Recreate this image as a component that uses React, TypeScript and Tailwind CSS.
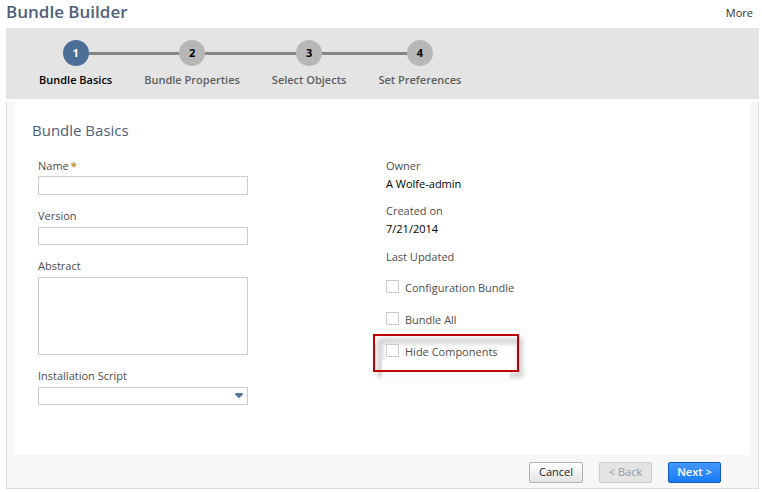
const steps = ["Bundle Basics", "Bundle Properties", "Select Objects", "Set Preferences"];

const labelClass = "block text-[11px] leading-4 font-medium text-[#4d4d4d]";
const fieldClass = "block w-full border border-[#cccccc] bg-white px-1 text-[11px] text-[#333333] outline-none";

function StepBar() {
  return (
    <ol className="flex bg-[#e4e4e4] px-[17px] pt-3 pb-[11px]">
      {steps.map((step, i) => (
        <li key={step} className="flex flex-col">
          <div className="flex items-center">
            <span className={i > 0 ? "h-[3px] flex-1 bg-[#858585]" : "h-[3px] flex-1"} />
            <span
              className={
                i === 0
                  ? "size-[26px] rounded-full bg-[#4b6e97] text-center text-[11px] leading-[26px] font-bold text-white"
                  : "size-[26px] rounded-full bg-[#b7b7b7] text-center text-[11px] leading-[26px] font-bold text-black"
              }
            >
              {i + 1}
            </span>
            <span className={i < steps.length - 1 ? "h-[3px] flex-1 bg-[#858585]" : "h-[3px] flex-1"} />
          </div>
          <span
            className={
              i === 0
                ? "mt-1.5 px-4 text-[11px] leading-4 font-semibold whitespace-nowrap text-black"
                : "mt-1.5 px-4 text-[11px] leading-4 font-semibold whitespace-nowrap text-[#606060]"
            }
          >
            {step}
          </span>
        </li>
      ))}
    </ol>
  );
}

function Check({ id, label }: { id: string; label: string }) {
  return (
    <div className="flex h-4 items-start gap-1.5">
      <input id={id} type="checkbox" className="size-[13px] shrink-0 appearance-none border border-[#cccccc] bg-white checked:bg-[#4b6e97]" />
      <label htmlFor={id} className="text-[11px] leading-4 font-medium text-[#4d4d4d]">
        {label}
      </label>
    </div>
  );
}

function Highlight() {
  return (
    <div className="pointer-events-none absolute -top-2.5 -left-[13px] h-[38px] w-[146px]">
      <div className="absolute top-1 left-1 h-10 w-full rounded-xs border-[6px] border-[#0000002b] blur-[2px]" />
      <div className="absolute right-[9px] bottom-0 left-[9px] h-3 bg-white" />
      <div className="absolute top-[38px] right-[9px] left-[9px] h-2 bg-[#fcfcfc]" />
      <div className="absolute inset-0 border-2 border-[#c00000]" />
    </div>
  );
}

export default function App() {
  return (
    <main className="bg-white pr-[3px] pb-[3px] pl-1.5 font-['Open_Sans','Noto_Sans',sans-serif]">
      <header className="flex h-7 items-start justify-between pr-1.5">
        <h1 className="text-[17px] leading-6 font-semibold text-[#4d5f79]">Bundle Builder</h1>
        <a href="#more" className="pt-[5px] text-[11px] leading-4 text-[#333333]">
          More
        </a>
      </header>
      <StepBar />
      <form className="mt-[3px] border border-t-0 border-[#dddddd] bg-[#f7f7f7] px-2" onSubmit={(e) => e.preventDefault()}>
        <section className="bg-white px-[17px] pt-[18px] pb-[50px]">
          <h2 className="text-[15px] leading-5 text-[#4d5f79]">Bundle Basics</h2>
          <div className="mt-[18px] flex gap-[138px] pl-1.5">
            <div className="w-[210px]">
              <label htmlFor="name" className={labelClass}>
                Name <span className="-ml-px font-bold text-[#c48a2c]">*</span>
              </label>
              <input id="name" type="text" className={`${fieldClass} mt-0.5 h-[19px]`} />
              <label htmlFor="version" className={`${labelClass} mt-[13px]`}>
                Version
              </label>
              <input id="version" type="text" className={`${fieldClass} mt-[3px] h-[18px]`} />
              <label htmlFor="abstract" className={`${labelClass} mt-[13px]`}>
                Abstract
              </label>
              <textarea id="abstract" className={`${fieldClass} mt-[3px] h-[78px] resize-none`} />
              <label htmlFor="script" className={`${labelClass} mt-[13px]`}>
                Installation Script
              </label>
              <div className="relative mt-[3px]">
                <select id="script" className={`${fieldClass} h-[18px] appearance-none`}>
                  <option value=""></option>
                </select>
                <svg className="pointer-events-none absolute top-1.5 right-[5px]" width="8" height="5" viewBox="0 0 8 5" aria-hidden="true">
                  <path d="M0.5 0h7L8 1.5 4.6 4.7a.9.9 0 0 1-1.2 0L0 1.5z" fill="#56759d" />
                </svg>
              </div>
            </div>
            <div>
              <dl className="text-[11px] leading-4">
                <dt className="font-medium text-[#4d4d4d]">Owner</dt>
                <dd className="mt-0.5 text-black">A Wolfe-admin</dd>
                <dt className="mt-[11px] font-medium text-[#4d4d4d]">Created on</dt>
                <dd className="mt-0.5 text-black">7/21/2014</dd>
                <dt className="mt-3 font-medium text-[#4d4d4d]">Last Updated</dt>
              </dl>
              <div className="mt-[15px] flex flex-col gap-4">
                <Check id="configuration" label="Configuration Bundle" />
                <Check id="all" label="Bundle All" />
                <div className="relative">
                  <Highlight />
                  <div className="relative">
                    <Check id="hide" label="Hide Components" />
                  </div>
                </div>
              </div>
            </div>
          </div>
        </section>
        <footer className="flex justify-end gap-4 pt-[7px] pr-[29px] pb-[5px] text-[11px] font-medium">
          <button type="button" className="h-[21px] w-[54px] rounded-xs border border-[#b2b2b2] bg-linear-to-b from-white to-[#e5e5e5] text-[#222222]">
            Cancel
          </button>
          <button type="button" disabled className="h-[21px] w-[53px] rounded-xs border border-[#cccccc] bg-[#e4e4e4] text-[#999999]">
            &lt; Back
          </button>
          <button type="submit" className="h-[21px] w-[53px] rounded-xs border border-[#125ab2] bg-linear-to-b from-[#4297ff] to-[#157bf8] font-semibold text-white">
            Next &gt;
          </button>
        </footer>
      </form>
    </main>
  );
}
